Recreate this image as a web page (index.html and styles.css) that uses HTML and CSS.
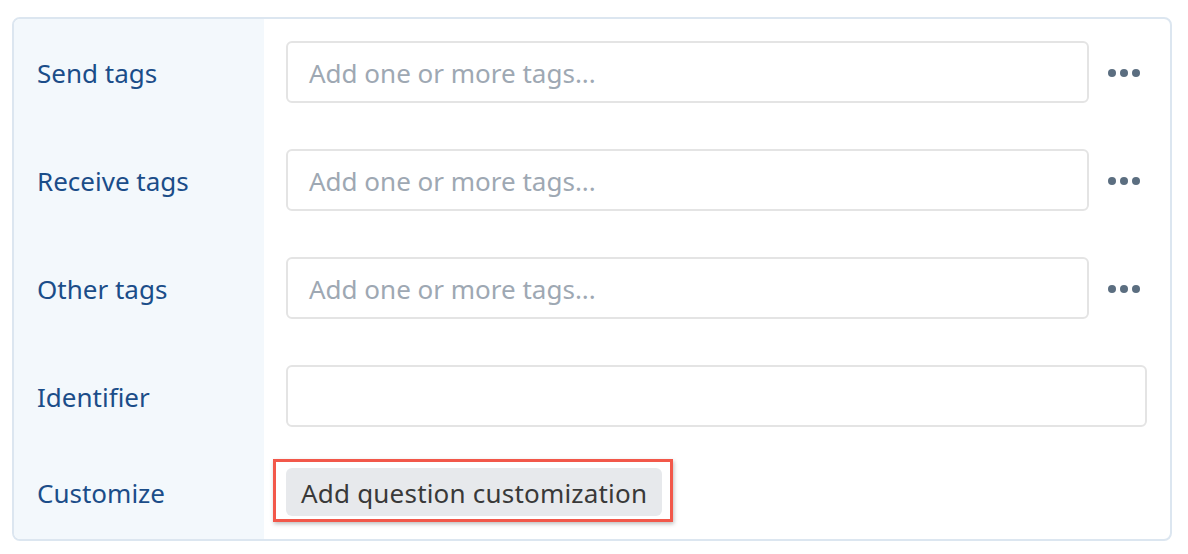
FILE: index.html
```html
<!DOCTYPE html>
<html>
<head>
<meta charset="utf-8">
<link rel="stylesheet" href="styles.css">
</head>
<body>
<div class="card">
  <div class="label">Send tags</div>
  <div class="field">
    <div class="input placeholder">Add one or more tags...</div>
    <div class="more"><span></span><span></span><span></span></div>
  </div>

  <div class="label">Receive tags</div>
  <div class="field">
    <div class="input placeholder">Add one or more tags...</div>
    <div class="more"><span></span><span></span><span></span></div>
  </div>

  <div class="label">Other tags</div>
  <div class="field">
    <div class="input placeholder">Add one or more tags...</div>
    <div class="more"><span></span><span></span><span></span></div>
  </div>

  <div class="label">Identifier</div>
  <div class="field">
    <div class="input"></div>
  </div>

  <div class="label last">Customize</div>
  <div class="field last">
    <div class="highlight">
      <div class="btn">Add question customization</div>
    </div>
  </div>
</div>
</body>
</html>
```

FILE: styles.css
```css
html, body {
  margin: 0;
  padding: 0;
  background: #ffffff;
}

body {
  padding: 17px 16px 13px 12px;
  font-family: "Noto Sans", "Open Sans", sans-serif;
}

.card {
  display: grid;
  grid-template-columns: 250px 1fr;
  border: 2px solid #dce6f0;
  border-radius: 8px;
  overflow: hidden;
  height: 524px;
  box-sizing: border-box;
}

.label {
  background: #f3f8fc;
  color: #1b4d89;
  font-size: 26px;
  display: flex;
  align-items: center;
  padding-left: 23px;
  padding-top: 0;
  height: 108px;
  box-sizing: border-box;
}

.field {
  display: flex;
  align-items: center;
  padding: 22px 23px 24px 22px;
  height: 108px;
  box-sizing: border-box;
}

.label.last, .field.last {
  height: auto;
}

.label.last {
  padding-bottom: 6px;
}

.field.last {
  padding: 8px 0 18px 9px;
  align-items: flex-start;
}

.input {
  flex: 1;
  height: 62px;
  box-sizing: border-box;
  border: 2px solid #e4e4e4;
  border-radius: 6px;
  padding-left: 21px;
  padding-top: 2px;
  display: flex;
  align-items: center;
  font-size: 26px;
}

.placeholder {
  color: #9ea8b3;
}

.more {
  display: flex;
  gap: 4px;
  margin-left: 19px;
  margin-right: 7px;
  width: 32px;
  padding-top: 2px;
}

.more span {
  width: 8px;
  height: 8px;
  border-radius: 50%;
  background: #5b6e80;
}

.highlight {
  border: 3px solid #f2584a;
  padding: 6px 8px 3px 10px;
  box-shadow: 1px 2px 4px rgba(0, 0, 0, 0.25);
}

.btn {
  background: #e7e9ec;
  color: #393939;
  border-radius: 6px;
  height: 48px;
  width: 376px;
  box-sizing: border-box;
  display: flex;
  align-items: center;
  padding-left: 15px;
  padding-top: 2px;
  letter-spacing: 0.2px;
  font-size: 26px;
}
```
